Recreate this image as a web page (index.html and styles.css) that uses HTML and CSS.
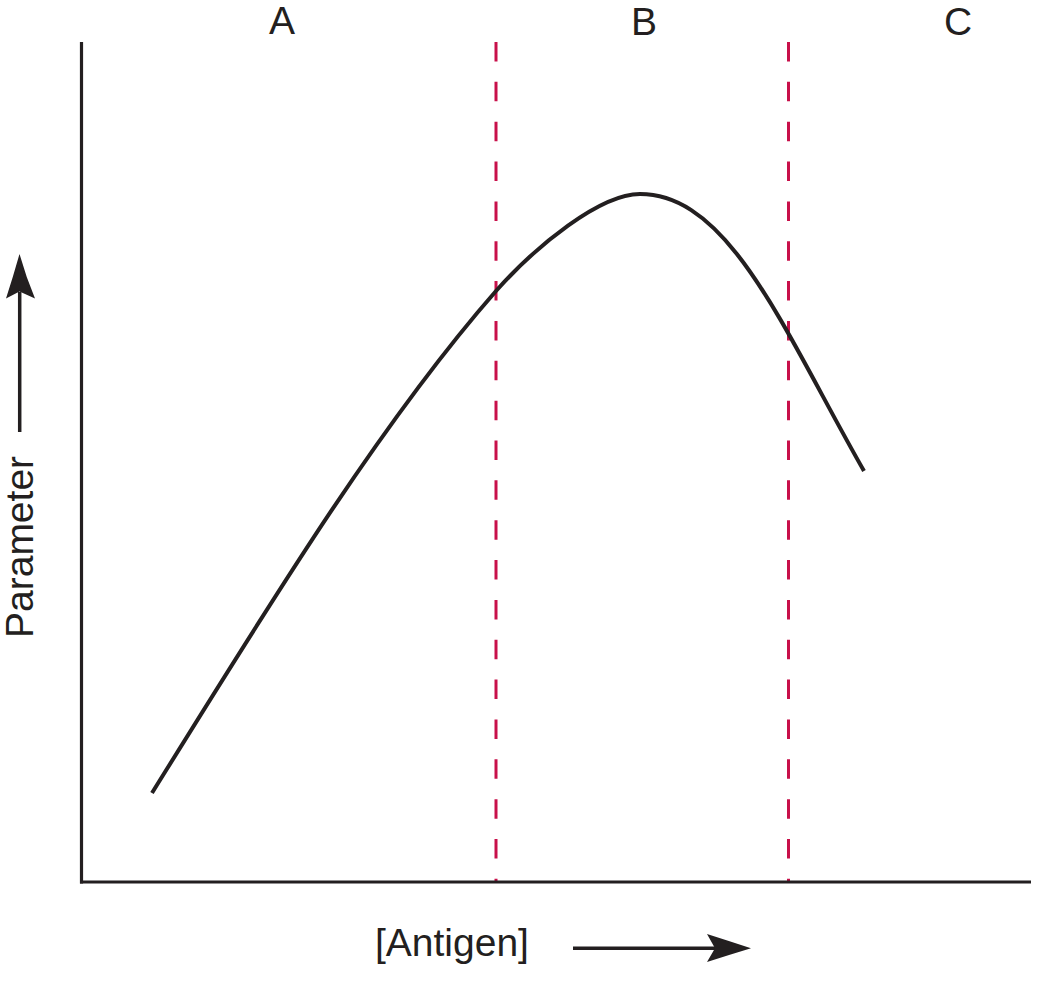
FILE: index.html
```html
<!DOCTYPE html>
<html lang="en">
<head>
<meta charset="utf-8">
<title>Parameter vs Antigen</title>
<link rel="stylesheet" href="styles.css">
</head>
<body>
<div class="figure">
  <svg class="chart" width="1044" height="981" viewBox="0 0 1044 981" xmlns="http://www.w3.org/2000/svg">
    <text class="label" x="282" y="34" text-anchor="middle">A</text>
    <text class="label" x="644" y="35" text-anchor="middle">B</text>
    <text class="label" x="958" y="34.5" text-anchor="middle">C</text>

    <line class="divider" x1="496" y1="42" x2="496" y2="882"/>
    <line class="divider" x1="788.5" y1="42" x2="788.5" y2="882"/>

    <line class="axis" x1="81.5" y1="42" x2="81.5" y2="883.5"/>
    <line class="axis" x1="80" y1="882" x2="1031" y2="882"/>

    <path class="curve" d="M152,793 C267,608 381,422 496,291 C536,246 600,194 640,194 C730,194 784,331 864,471"/>

    <text class="label" transform="translate(33,638) rotate(-90)">Parameter</text>
    <line class="arrow-shaft" x1="19.7" y1="432" x2="19.7" y2="292"/>
    <path class="arrow-head" d="M19.5,254 Q26,277 35,298.5 L19.5,291.5 L6,298.5 Q13,277 19.5,254 Z"/>

    <text class="label" x="375" y="956">[Antigen]</text>
    <line class="arrow-shaft" x1="573" y1="948.3" x2="716" y2="948.3"/>
    <path class="arrow-head" d="M751,948.3 Q729,941 707,934 L715,948.3 L707,962 Q729,955 751,948.3 Z"/>
  </svg>
</div>
</body>
</html>
```

FILE: styles.css
```css
html, body {
  margin: 0;
  padding: 0;
  background: #ffffff;
}

.figure {
  width: 1044px;
  height: 981px;
  overflow: hidden;
}

.chart {
  display: block;
}

.label {
  font-family: "Liberation Sans", Arial, sans-serif;
  font-size: 39px;
  fill: #231f20;
}

.axis {
  stroke: #231f20;
  stroke-width: 3.2;
  fill: none;
}

.divider {
  stroke: #c8104a;
  stroke-width: 3;
  stroke-dasharray: 19.5 20.35;
  fill: none;
}

.curve {
  stroke: #231f20;
  stroke-width: 4;
  fill: none;
}

.arrow-shaft {
  stroke: #231f20;
  stroke-width: 3.5;
}

.arrow-head {
  fill: #231f20;
  stroke: none;
}
```
